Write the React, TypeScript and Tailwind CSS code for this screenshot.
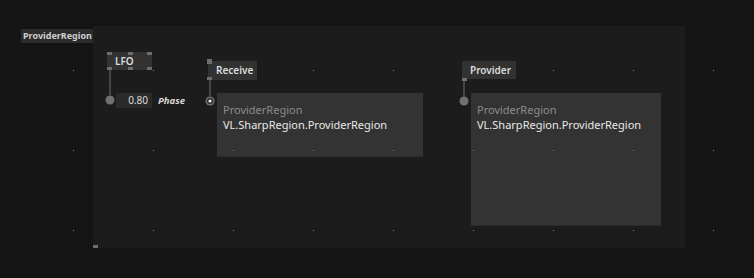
const DOTS = Array.from({ length: 27 }, (_, i) => i)

// vertical link from a node down into a pin
function Link({ length, ring = false }: { length: number; ring?: boolean }) {
  const h = length + 10
  return (
    <svg width="10" height={h} viewBox={`0 0 10 ${h}`} className="shrink-0">
      <line x1="5" y1="0" x2="5" y2={length} stroke="#6e6e6e" strokeWidth="1" />
      <circle cx="5" cy={length + 5} r="4.5" fill="#707070" />
      {ring && <circle cx="5" cy={length + 5} r="3" fill="#2a2a2a" />}
      {ring && <circle cx="5" cy={length + 5} r="1.6" fill="#f0f0f0" />}
    </svg>
  )
}

function Handle({ className }: { className: string }) {
  return <div className={`absolute h-[3px] w-[5px] bg-[#6e6e6e] ${className}`} />
}

function RegionBox({ className }: { className: string }) {
  return (
    <div className={`border-b border-[#2b2b2b] bg-[#333333] px-[6px] pt-[9px] text-[11px] leading-[15px] ${className}`}>
      <div className="text-[#8c8c8c]">ProviderRegion</div>
      <div className="text-[#e8e8e8]">VL.SharpRegion.ProviderRegion</div>
    </div>
  )
}

export default function App() {
  return (
    <div
      className="relative h-[278px] w-[754px] overflow-hidden bg-[#141414] pl-[21px] pt-[26px]"
      style={{ fontFamily: '"Noto Sans", "Open Sans", sans-serif' }}
    >
      <div className="flex items-start">
        <div className="mt-[3px] flex h-[14px] w-[72px] items-center bg-[#2b2b2b] px-[2px] text-[9px] font-bold text-[#cfcfcf]">
          ProviderRegion
        </div>

        {/* region canvas */}
        <div className="relative h-[222px] w-[592px] bg-[#1c1c1c]">
          <Handle className="bottom-0 left-0" />

          {/* LFO */}
          <div className="absolute left-[12px] top-[26px] flex flex-col items-start">
            <div className="relative ml-[2px] flex h-[18px] w-[45px] items-center bg-[#323232] pl-[8px] text-[10px] font-semibold text-[#dcdcdc]">
              LFO
              <Handle className="left-0 top-0" />
              <Handle className="left-[21px] top-0" />
              <Handle className="right-0 top-0" />
              <Handle className="bottom-0 left-0" />
              <Handle className="bottom-0 left-[21px]" />
              <Handle className="bottom-0 right-0" />
            </div>
            <div className="flex items-start">
              <Link length={25} />
              <div className="ml-[1px] mt-[23px] flex h-[15px] w-[36px] items-center justify-end bg-[#2a2a2a] pr-[4px] text-[10px] text-[#dcdcdc]">
                0.80
              </div>
              <div className="ml-[6px] mt-[23px] text-[9.5px] font-bold italic leading-[15px] text-[#d8d8d8]">Phase</div>
            </div>
          </div>

          {/* Receive */}
          <div className="absolute left-[112px] top-[33px] flex flex-col items-start">
            <div className="relative ml-[3px] mt-[2px] flex h-[19px] w-[49px] items-center bg-[#323232] pl-[8px] text-[10px] font-semibold text-[#dcdcdc]">
              Receive
              <div className="absolute -top-[2px] left-[-1px] h-[5px] w-[5px] bg-[#6e6e6e]" />
              <Handle className="bottom-0 left-[-1px]" />
            </div>
            <div className="flex items-start">
              <Link length={16} ring />
              <RegionBox className="ml-[2px] mt-[13px] h-[64px] w-[206px]" />
            </div>
          </div>

          {/* Provider */}
          <div className="absolute left-[366px] top-[35px] flex flex-col items-start">
            <div className="relative ml-[3px] flex h-[18px] w-[54px] items-center bg-[#323232] pl-[8px] text-[10px] font-semibold text-[#dcdcdc]">
              Provider
              <div className="absolute -bottom-[2px] left-0 h-[3px] w-[5px] bg-[#6e6e6e]" />
            </div>
            <div className="mt-[2px] flex items-start">
              <Link length={15} />
              <RegionBox className="ml-[2px] mt-[12px] h-[133px] w-[190px]" />
            </div>
          </div>
        </div>
      </div>

      {/* grid dots */}
      <div className="pointer-events-none absolute left-[73px] top-[70px] grid grid-cols-[repeat(9,80px)] grid-rows-[repeat(3,80px)]">
        {DOTS.map((i) => (
          <div key={i} className="h-px w-px bg-[#7a7a7a]" />
        ))}
      </div>
    </div>
  )
}
